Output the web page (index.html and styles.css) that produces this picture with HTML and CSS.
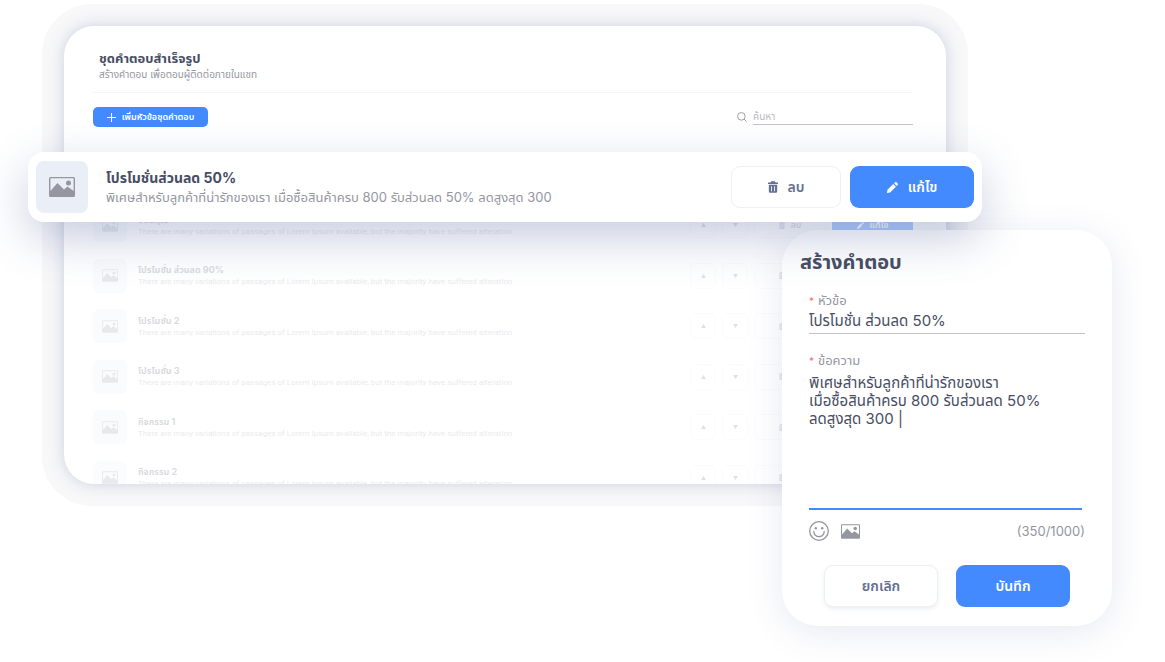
FILE: index.html
```
<!DOCTYPE html>
<html lang="th">

<head>
  <meta charset="UTF-8">
  <meta name="viewport" content="width=device-width, initial-scale=1.0">
  <title>ชุดคำตอบสำเร็จรูป</title>
  <link rel="stylesheet" href="styles.css">
</head>

<body>
  <svg class="sprite" aria-hidden="true">
    <symbol id="icon-image" viewBox="0 0 26 20">
      <path fill="currentColor" fill-rule="evenodd" d="M1.500 0h23A1.500 1.500 0 0 1 26 1.500v17a1.500 1.500 0 0 1-1.500 1.500h-23A1.500 1.500 0 0 1 0 18.500v-17A1.500 1.500 0 0 1 1.500 0zM1.400 1.300v12.700L8.500 6l6.500 6.500 3.500-3 6.100 4.500V1.300zM19.500 3.400a2.500 2.500 0 1 1 0 5a2.500 2.500 0 0 1 0-5z" />
    </symbol>
    <symbol id="icon-trash" viewBox="0 0 12 14">
      <path fill="currentColor" fill-rule="evenodd" d="M4 0h4l1 1.500h3V3.300H0V1.500h3zM1 4.300h10V12.500Q11 14 9.500 14h-7Q1 14 1 12.500zM3.600 6v6h1V6zM7.400 6v6h1V6z" />
    </symbol>
    <symbol id="icon-pencil" viewBox="0 0 14 14">
      <path fill="currentColor" d="M0 14l.6-4 7.400-7.300 3.400 3.400L4 13.400zM9 1.700l1.300-1.300q.9-.8 1.800 0l1.500 1.500q.8.900 0 1.800L12.400 5z" />
    </symbol>
  </svg>

  <main class="stage">
    <section class="frame">
      <div class="card">
        <header class="card-header">
          <h1>ชุดคำตอบสำเร็จรูป</h1>
          <p>สร้างคำตอบ เพื่อตอบผู้ติดต่อภายในแชท</p>
        </header>

        <div class="toolbar">
          <button class="btn btn-primary btn-add" type="button">
            <svg width="9" height="9" viewBox="0 0 9 9"><path d="M4.500 0v9M0 4.500h9" stroke="currentColor" fill="none" /></svg>
            เพิ่มหัวข้อชุดคำตอบ
          </button>
          <div class="search">
            <label for="search" aria-label="ค้นหา">
              <svg width="10" height="10" viewBox="0 0 11 11"><circle cx="4.800" cy="4.800" r="4.200" stroke="currentColor" fill="none" /><path d="M7.800 7.800l2.700 2.700" stroke="currentColor" /></svg>
            </label>
            <input type="search" id="search" placeholder="ค้นหา">
          </div>
        </div>

        <ul class="list" id="list"></ul>
      </div>
    </section>

    <section class="modal">
      <h2>สร้างคำตอบ</h2>
      <form class="form">
        <label for="topic"><span class="required">*</span>หัวข้อ</label>
        <input type="text" id="topic" value="โปรโมชั่น ส่วนลด 50%">

        <label for="message"><span class="required">*</span>ข้อความ</label>
        <textarea id="message" spellcheck="false">พิเศษสำหรับลูกค้าที่น่ารักของเรา
เมื่อซื้อสินค้าครบ 800 รับส่วนลด 50%
ลดสูงสุด 300 |</textarea>

        <div class="form-tools">
          <button class="tool" type="button" aria-label="อีโมจิ">
            <svg width="20" height="20" viewBox="0 0 20 20"><circle cx="10" cy="10" r="9.300" stroke="currentColor" stroke-width="1.300" fill="none" /><circle cx="6.800" cy="7.200" r="1.200" fill="currentColor" /><circle cx="13.200" cy="7.200" r="1.200" fill="currentColor" /><path d="M4.800 10.500a5.200 5.200 0 0 0 10.400 0" stroke="currentColor" stroke-width="1.300" stroke-linecap="round" fill="none" /></svg>
          </button>
          <button class="tool" type="button" aria-label="รูปภาพ">
            <svg width="19" height="15"><use href="#icon-image" /></svg>
          </button>
          <span class="counter">(350/1000)</span>
        </div>

        <div class="form-actions">
          <button class="btn btn-light btn-cancel" type="button">ยกเลิก</button>
          <button class="btn btn-primary" type="button">บันทึก</button>
        </div>
      </form>
    </section>

    <article class="highlight">
      <div class="thumb thumb-large"><svg width="26" height="20"><use href="#icon-image" /></svg></div>
      <div class="highlight-text">
        <h3>โปรโมชั่นส่วนลด 50%</h3>
        <p>พิเศษสำหรับลูกค้าที่น่ารักของเรา เมื่อซื้อสินค้าครบ 800 รับส่วนลด 50% ลดสูงสุด 300</p>
      </div>
      <button class="btn btn-light btn-delete" type="button">
        <svg width="10" height="12"><use href="#icon-trash" /></svg>
        ลบ
      </button>
      <button class="btn btn-primary btn-edit" type="button">
        <svg width="11" height="11"><use href="#icon-pencil" /></svg>
        แก้ไข
      </button>
    </article>
  </main>

  <script>
    const answers = ['ขอบคุณ', 'โปรโมชั่น ส่วนลด 90%', 'โปรโมชั่น 2', 'โปรโมชั่น 3', 'กิจกรรม 1', 'กิจกรรม 2'];
    const detail = 'There are many variations of passages of Lorem Ipsum available, but the majority have suffered alteration';

    document.getElementById('list').innerHTML = answers.map(title => `
      <li class="row">
        <div class="thumb"><svg width="16" height="13"><use href="#icon-image" /></svg></div>
        <div class="row-text">
          <h3>${title}</h3>
          <p>${detail}</p>
        </div>
        <button class="btn btn-light btn-move" type="button" aria-label="ขึ้น"><svg width="5" height="4" viewBox="0 0 5 4"><path d="M2.500 0L5 4H0z" fill="currentColor" /></svg></button>
        <button class="btn btn-light btn-move" type="button" aria-label="ลง"><svg width="5" height="4" viewBox="0 0 5 4"><path d="M0 0h5L2.500 4z" fill="currentColor" /></svg></button>
        <button class="btn btn-light btn-small" type="button"><svg width="6" height="7"><use href="#icon-trash" /></svg>ลบ</button>
        <button class="btn btn-primary btn-small btn-small-edit" type="button"><svg width="7" height="7"><use href="#icon-pencil" /></svg>แก้ไข</button>
      </li>`).join('');
  </script>
</body>

</html>
```
FILE: styles.css
```
* {
  box-sizing: border-box;
}

body {
  margin: 0;
  background-color: #fff;
  color: #474d63;
  font-family: Inter, "Noto Sans Thai", "Noto Sans", sans-serif;
}

h1,
h2,
h3,
p,
ul {
  margin: 0;
  padding: 0;
}

button,
input,
textarea {
  font: inherit;
  color: inherit;
}

.sprite {
  display: none;
}

.stage {
  position: relative;
  min-height: 100vh;
  padding: 4px 197px 0 42px;
  overflow: hidden;
}

/* background window */
.frame {
  padding: 22px;
  border-radius: 50px;
  background-color: #f8f8f9;
}

.card {
  max-height: 458px;
  padding: 24px 33px 0 29px;
  border-radius: 30px;
  background-color: #fff;
  box-shadow: 0 0 16px rgba(80, 95, 160, 0.26);
  overflow: hidden;
}

.card-header {
  padding: 0 6px 10px;
  border-bottom: 1px solid #f5f5f6;
}

.card-header h1 {
  font-size: 13px;
  line-height: 17px;
}

.card-header p {
  color: #9496a1;
  font-size: 10px;
  line-height: 15px;
}

.toolbar {
  display: flex;
  align-items: center;
  justify-content: space-between;
  padding-top: 14px;
}

.search {
  display: flex;
  align-items: center;
  gap: 6px;
  color: #9496a1;
}

.search label {
  display: flex;
}

.search input {
  width: 160px;
  height: 15px;
  padding: 0 0 2px;
  border: 0;
  border-bottom: 1px solid #c3c4ca;
  background: none;
  font-size: 10px;
  outline: none;
}

.search input::placeholder {
  color: #b9bac1;
}

/* buttons */
.btn {
  display: flex;
  align-items: center;
  justify-content: center;
  padding: 0;
  border: 1px solid transparent;
  border-radius: 9px;
  font-weight: 600;
  white-space: nowrap;
  cursor: pointer;
}

.btn-primary {
  background-color: #438aff;
  color: #fff;
}

.btn-light {
  background-color: #fff;
  border-color: #eff0f3;
  color: #65708f;
}

.btn-add {
  gap: 6px;
  width: 115px;
  height: 20px;
  border-radius: 5px;
  font-size: 9px;
}

/* list */
.list {
  display: grid;
  grid-auto-rows: 1fr;
  height: 303px;
  margin-top: 73px;
  list-style: none;
}

.row {
  display: flex;
  align-items: center;
  gap: 6px;
}

.row > * {
  opacity: 0.2;
}

.row .btn-small-edit {
  opacity: 0.4;
}

.row .btn-light {
  border-color: #eff0f3;
}

.thumb {
  display: flex;
  align-items: center;
  justify-content: center;
  width: 34px;
  height: 34px;
  border-radius: 5px;
  background-color: #eaeef7;
  color: #9496a1;
}

.row .thumb {
  border-radius: 6px;
}

.row-text {
  flex: 1;
  padding-left: 5px;
}

.row-text h3 {
  font-size: 9px;
  line-height: 13px;
}

.row-text p {
  color: #9496a1;
  font-family: Roboto, sans-serif;
  font-size: 8px;
  line-height: 12px;
}

.btn-move {
  width: 26px;
  height: 26px;
  border-radius: 6px;
}

.btn-small {
  gap: 6px;
  width: 72px;
  height: 26px;
  border-radius: 6px;
  font-size: 9px;
}

.btn-small-edit {
  width: 81px;
}

/* selected answer, floating above the window */
.highlight {
  position: absolute;
  top: 152px;
  left: 28px;
  right: 183px;
  display: flex;
  align-items: center;
  gap: 9px;
  padding: 9px 8px;
  border-radius: 16px;
  background-color: #fff;
  box-shadow: 0 16px 48px -2px rgba(70, 90, 150, 0.33);
}

.thumb-large {
  width: 52px;
  height: 52px;
  border-radius: 8px;
}

.highlight-text {
  flex: 1;
  padding-left: 9px;
}

.highlight-text h3 {
  font-size: 14px;
  line-height: 20px;
}

.highlight-text p {
  color: #9496a1;
  font-size: 13px;
  line-height: 18px;
}

.btn-delete,
.btn-edit {
  gap: 10px;
  height: 42px;
  font-size: 14px;
}

.btn-delete {
  width: 110px;
}

.btn-edit {
  width: 124px;
}

/* create answer dialog */
.modal {
  position: absolute;
  top: 230px;
  right: 53px;
  width: 330px;
  padding: 18px 27px 19px;
  border-radius: 36px;
  background-color: #fff;
  box-shadow: 0 6px 36px rgba(70, 85, 150, 0.13);
}

.modal h2 {
  margin: 0 -9px 14px;
  font-size: 20px;
  line-height: 28px;
}

.form {
  display: flex;
  flex-direction: column;
}

.form label {
  color: #9496a1;
  font-size: 13px;
  line-height: 20px;
}

.required {
  margin-right: 4px;
  color: #f87171;
  font-size: 10px;
  line-height: 1;
}

.form input {
  height: 24px;
  margin-bottom: 16px;
  padding: 0;
  border: 0;
  border-bottom: 1px solid #c3c4ca;
  background: none;
  font-size: 15px;
  outline: none;
}

.form textarea {
  height: 136px;
  margin: 4px 3px 0 0;
  padding: 0;
  border: 0;
  border-bottom: 2px solid #438aff;
  background: none;
  font-size: 15px;
  line-height: 18px;
  outline: none;
  resize: none;
}

.form-tools {
  display: flex;
  align-items: center;
  gap: 12px;
  margin-top: 11px;
  color: #9496a1;
}

.tool {
  display: flex;
  padding: 0;
  border: 0;
  background: none;
  cursor: pointer;
}

.counter {
  margin-left: auto;
  font-size: 13px;
  line-height: 20px;
}

.form-actions {
  display: flex;
  gap: 18px;
  margin-top: 24px;
  padding: 0 15px;
}

.form-actions .btn {
  flex: 1;
  height: 42px;
  font-size: 14px;
}

.btn-cancel {
  box-shadow: 0 2px 4px rgba(70, 85, 150, 0.1);
}
```
